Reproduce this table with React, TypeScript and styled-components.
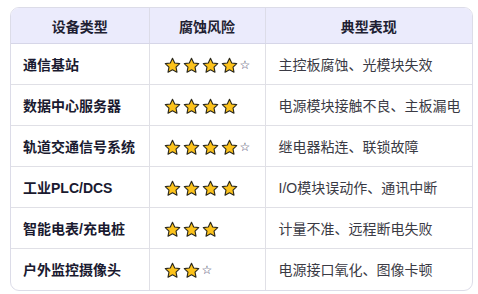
import styled, { createGlobalStyle } from 'styled-components';

const GlobalStyle = createGlobalStyle`
  body {
    margin: 0;
    background: #ffffff;
    font-family: "Liberation Sans", "Noto Sans CJK SC", sans-serif;
  }
`;

type Device = {
  name: string;
  stars: number;
  half: boolean;
  symptom: string;
};

const devices: Device[] = [
  { name: '通信基站', stars: 4, half: true, symptom: '主控板腐蚀、光模块失效' },
  { name: '数据中心服务器', stars: 4, half: false, symptom: '电源模块接触不良、主板漏电' },
  { name: '轨道交通信号系统', stars: 4, half: true, symptom: '继电器粘连、联锁故障' },
  { name: '工业PLC/DCS', stars: 4, half: false, symptom: 'I/O模块误动作、通讯中断' },
  { name: '智能电表/充电桩', stars: 3, half: false, symptom: '计量不准、远程断电失败' },
  { name: '户外监控摄像头', stars: 2, half: true, symptom: '电源接口氧化、图像卡顿' },
];

const Star = () => (
  <svg width="17" height="17" viewBox="0 0 24 24">
    <path
      d="M12 1.8l3.1 6.6 7.1.9-5.2 5 1.3 7.1L12 18l-6.3 3.4 1.3-7.1-5.2-5 7.1-.9z"
      fill="#fcc21b"
      stroke="#2d2a1c"
      strokeWidth="1.6"
      strokeLinejoin="round"
    />
  </svg>
);

const Rating = ({ count, half }: { count: number; half: boolean }) => (
  <StarRow>
    {Array.from({ length: count }).map((_, i) => (
      <Star key={i} />
    ))}
    {half && <EmptyStar>☆</EmptyStar>}
  </StarRow>
);

export default function App() {
  return (
    <>
      <GlobalStyle />
      <Card>
        <Table>
          <colgroup>
            <col style={{ width: 138 }} />
            <col style={{ width: 116 }} />
            <col />
          </colgroup>
          <thead>
            <tr>
              <Th>设备类型</Th>
              <Th>腐蚀风险</Th>
              <Th>典型表现</Th>
            </tr>
          </thead>
          <tbody>
            {devices.map((d) => (
              <Row key={d.name}>
                <NameCell>{d.name}</NameCell>
                <RiskCell>
                  <Rating count={d.stars} half={d.half} />
                </RiskCell>
                <SymptomCell>{d.symptom}</SymptomCell>
              </Row>
            ))}
          </tbody>
        </Table>
      </Card>
    </>
  );
}

const Card = styled.div`
  margin: 7px 0 0 10px;
  width: 461px;
  border: 1px solid #dcdce8;
  border-radius: 9px;
  overflow: hidden;
  background: #ffffff;
`;

const Table = styled.table`
  width: 100%;
  border-collapse: collapse;
  table-layout: fixed;
  font-size: 14px;
`;

const Th = styled.th`
  height: 35px;
  padding: 0;
  background: #ebebfc;
  color: #1f1f33;
  font-weight: 700;
  text-align: center;
  border-bottom: 1px solid #d6d6e8;
  border-right: 1px solid #dcdce8;
  &:last-child {
    border-right: none;
  }
`;

const Row = styled.tr`
  height: 41px;
  td {
    border-top: 1px solid #e0e0e6;
    border-right: 1px solid #e0e0e6;
  }
  td:last-child {
    border-right: none;
  }
  &:first-child td {
    border-top: none;
  }
`;

const NameCell = styled.td`
  padding: 0 0 0 12px;
  color: #1a1a30;
  font-weight: 700;
  white-space: nowrap;
`;

const RiskCell = styled.td`
  padding: 0 0 0 14px;
`;

const SymptomCell = styled.td`
  padding: 0 0 0 13px;
  color: #3a3a44;
  white-space: nowrap;
`;

const StarRow = styled.div`
  display: flex;
  align-items: center;
  gap: 2px;
  padding-top: 2px;
`;

const EmptyStar = styled.span`
  font-family: "DejaVu Sans", sans-serif;
  font-size: 12px;
  line-height: 1;
  color: #3c3c5c;
`;
